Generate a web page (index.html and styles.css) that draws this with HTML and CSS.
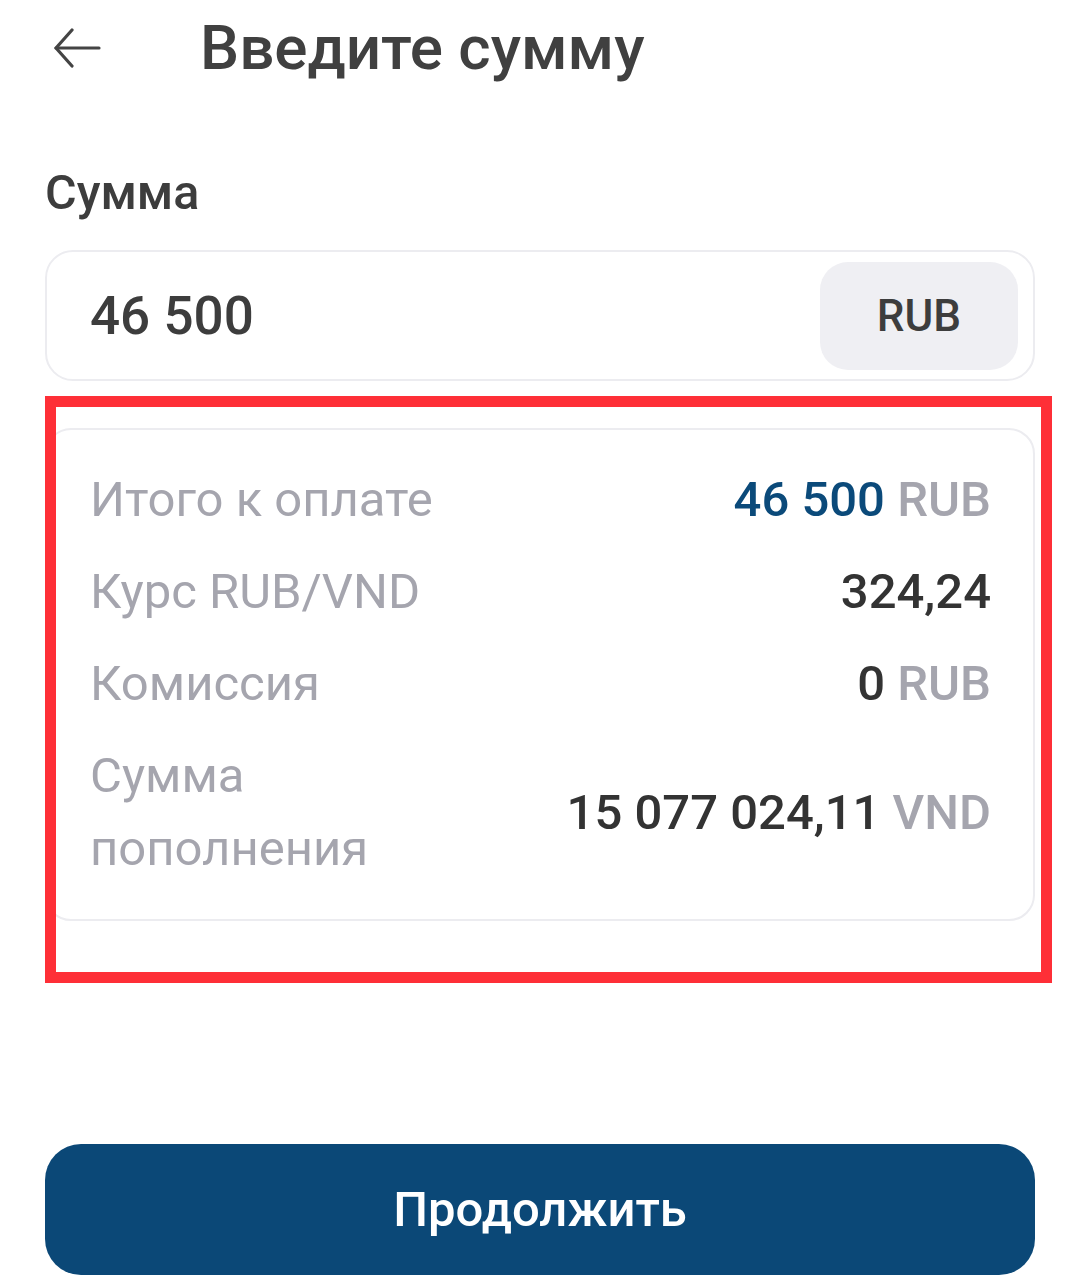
FILE: index.html
```html
<!DOCTYPE html>
<html lang="ru">
<head>
<meta charset="utf-8">
<link rel="stylesheet" href="styles.css">
</head>
<body>
<div class="screen">
  <header class="topbar">
    <button class="back" aria-label="Назад">
      <svg width="48" height="40" viewBox="0 0 48 40" fill="none" stroke="#444" stroke-width="3.2" stroke-linecap="round" stroke-linejoin="round">
        <path d="M46 20H3"/>
        <path d="M19 2L3 20l16 18"/>
      </svg>
    </button>
    <h1 class="title">Введите сумму</h1>
  </header>

  <div class="label">Сумма</div>
  <div class="amount-box">
    <div class="amount">46 500</div>
    <div class="currency">RUB</div>
  </div>

  <div class="summary-wrap">
    <div class="summary">
      <div class="row">
        <div class="key">Итого к оплате</div>
        <div class="val"><span class="blue">46 500</span> <span class="unit">RUB</span></div>
      </div>
      <div class="row">
        <div class="key">Курс RUB/VND</div>
        <div class="val">324,24</div>
      </div>
      <div class="row">
        <div class="key">Комиссия</div>
        <div class="val">0 <span class="unit">RUB</span></div>
      </div>
      <div class="row">
        <div class="key">Сумма<br>пополнения</div>
        <div class="val">15 077 024,11 <span class="unit">VND</span></div>
      </div>
    </div>
    <div class="highlight"></div>
  </div>

  <div class="spacer"></div>
  <button class="continue">Продолжить</button>
</div>
</body>
</html>
```
FILE: styles.css
```css
* { box-sizing: border-box; }
html, body { margin: 0; padding: 0; background: #fff; }
body { font-family: Roboto, "Noto Sans", sans-serif; color: #3d3d3d; }
.screen {
  width: 1080px;
  height: 1281px;
  padding: 0 45px 6px 45px;
  display: flex;
  flex-direction: column;
}
.topbar {
  display: flex;
  align-items: center;
  height: 96px;
}
.back {
  border: none;
  background: none;
  padding: 0;
  margin-left: 8px;
  width: 48px;
  height: 40px;
  display: flex;
}
.title {
  margin: 0 0 0 99px;
  font-size: 62px;
  font-weight: 500;
  color: #404040;
  line-height: 72px;
}
.label {
  margin-top: 70px;
  font-size: 48.5px;
  font-weight: 500;
  color: #3d3d3d;
  line-height: 54px;
}
.amount-box {
  margin-top: 30px;
  height: 131px;
  border: 2px solid #ececf0;
  border-radius: 28px;
  display: flex;
  align-items: center;
  justify-content: space-between;
  padding: 0 15px 0 43px;
}
.amount {
  font-size: 53px;
  font-weight: 500;
  color: #3d3d3d;
}
.currency {
  width: 198px;
  height: 108px;
  background: #efeff3;
  border-radius: 28px;
  display: flex;
  align-items: center;
  justify-content: center;
  font-size: 44px;
  font-weight: 500;
  color: #3d3d3d;
}
.summary-wrap {
  position: relative;
  margin-top: 47px;
  padding-bottom: 65px;
}
.summary {
  border: 2px solid #ececf0;
  border-radius: 26px;
  padding: 33px 42px 34px 43px;
  display: flex;
  flex-direction: column;
  gap: 19px;
}
.row {
  display: flex;
  justify-content: space-between;
  align-items: center;
  font-size: 49px;
  line-height: 73px;
}
.key { color: #a5a5ae; }
.val { font-weight: 500; color: #333; text-align: right; }
.blue { color: #0b4a7a; }
.unit { color: #a5a5ae; }
.highlight {
  position: absolute;
  left: 0;
  top: -32px;
  width: 1007px;
  height: 587px;
  border: 11px solid #fe2f37;
  pointer-events: none;
}
.spacer { flex: 1; }
.continue {
  height: 131px;
  border: none;
  border-radius: 36px;
  background: #0b4877;
  color: #fff;
  font-family: Roboto, "Noto Sans", sans-serif;
  font-size: 49px;
  font-weight: 500;
}
```
